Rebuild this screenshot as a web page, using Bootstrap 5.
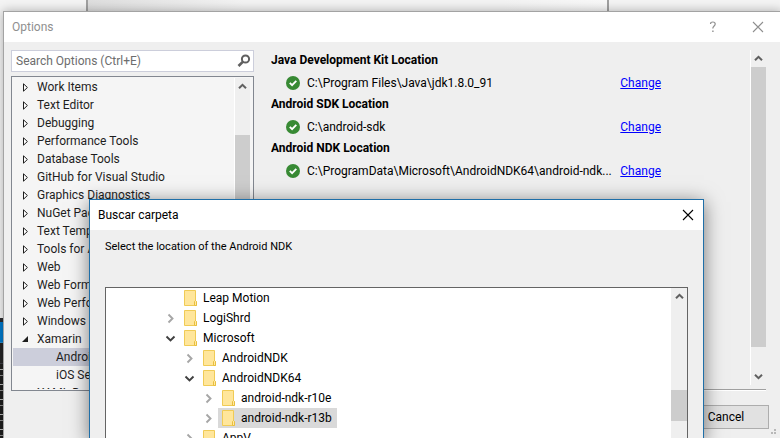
<!DOCTYPE html>
<html lang="en">
<head>
<meta charset="utf-8">
<meta name="viewport" content="width=device-width, initial-scale=1">
<title>Options</title>
<link href="https://cdn.jsdelivr.net/npm/bootstrap@5.3.0/dist/css/bootstrap.min.css" rel="stylesheet">
<style>
  body { font: 12px/18px Roboto, "Open Sans", sans-serif; color: #1e1e1e; background: #f4f4f4; }
  button { font: inherit; color: inherit; background: none; border: 0; padding: 0; }
  svg { display: block; flex: none; }

  /* desktop behind the windows */
  .page-behind { position: absolute; left: 86px; right: 171px; top: 0; height: 12px; border: solid #a0a0a0; border-width: 0 2px; background: linear-gradient(90deg, #dedede, #f3f3f3 30%, #f3f3f3 80%, #f8f8f8); }
  .editor-behind { position: absolute; left: 0; width: 4px; top: 318px; bottom: 0; background: #252526; border-top: 4px solid #2d2d30; }
  .editor-tab { height: 21px; background: #007acc; border-bottom: 1px solid #2c8fd0; }
  .editor-code { margin-top: 20px; height: 100%; border-top: 1px solid #3f3f46; background: repeating-linear-gradient(#1e1e1e 0 5px, #bdbdbd 5px 6px, #1e1e1e 6px 11px, #8d8d8d 11px 12px, #1e1e1e 12px 15px); }

  .win { position: absolute; background: #efefef; }
  .win-options { inset: 11px -2px -4px 3px; border: 1px solid #a3a3a3; box-shadow: 0 0 10px rgba(0,0,0,.3); }
  .win-browse { inset: 199px 76px -2px 89px; border: 1px solid #1f6fa8; color: #000; box-shadow: 0 3px 18px rgba(0,0,0,.5); }
  .title-row { height: 30px; background: #fff; flex: none; }
  .title-row h1 { font-size: 12px; line-height: 18px; font-weight: 400; margin: 0; }
  .win-options .title-row { color: #8f8f8f; padding: 0 17px 0 8px; gap: 35px; }
  .win-browse .title-row { padding: 0 9px 0 8px; }

  .options-body { padding: 8px 12px 0 7px; }
  .side-col { width: 243px; }
  .search-box { height: 22px; border: 1px solid #cccedb; background: #fff; padding: 0 2px 0 4px; }
  .search-box input { min-width: 0; border: 0; outline: 0; padding: 0; background: transparent; color: #6d6d6d; }
  .search-box input::placeholder { color: #6d6d6d; opacity: 1; }
  .opt-tree { height: 315px; border: 1px solid #828790; background: #f5f5f5; padding: 1px; }
  .opt-tree ul, .dir-tree ul { list-style: none; margin: 0; padding: 0; }
  .opt-tree li { height: 18px; padding-left: 8px; gap: 7px; white-space: nowrap; }
  .opt-tree li.child { padding-left: 43px; }
  .opt-tree li.chosen { background: #cccedb; }
  .opt-tree li button { width: 9px; height: 9px; }

  .scroller { flex: none; width: 16px; background: #efefef; color: #606060; }
  .scroller.edge { border-left: 1px solid #fff; }
  .opt-tree .scroller { margin-right: 2px; }
  .scroller button { height: 17px; width: 100%; display: flex; align-items: center; justify-content: center; }
  .thumb { background: #cdcdcd; }
  .side-thumb { margin-top: 40px; }
  .pane-thumb { margin-bottom: 21px; }
  .dir-thumb { margin-top: 85px; height: 31px; }

  .pane { margin-left: 17px; min-width: 0; }
  .pane h2 { font-size: 12px; line-height: 20px; font-weight: 700; margin: 0; color: #000; }
  .pane-content { padding-right: 89px; color: #000; }
  .loc-row { height: 24px; padding: 1px 0 0 15px; gap: 7px; }
  .loc-row a { color: #00f; text-decoration: underline; }
  .pane-scroll { height: 335px; }
  .pane-view { padding-right: 3px; }
  .rule { border-top: 1px solid #a0a0a0; border-bottom: 1px solid #fff; margin: 4px 3px 0 0; height: 2px; }
  .footer-row { margin-top: 14px; }
  .cancel-btn { width: 86px; height: 24px; border: 1px solid #adadad; background: #e1e1e1; color: #000; }
  .grip { position: absolute; right: 3px; bottom: 4px; }

  .browse-body { padding: 8px 15px 0; min-height: 0; }
  .browse-body p { font-size: 11px; line-height: 18px; margin: 0 0 31px; }
  .dir-tree { min-height: 0; border: 1px solid #646464; border-bottom: 0; background: #fff; }
  .dir-tree li { height: 20px; padding-left: 59px; line-height: 20px; white-space: nowrap; }
  .dir-tree li.l1 { padding-left: 78px; }
  .dir-tree li.l2 { padding-left: 97px; }
  .dir-tree li button, .dir-tree .no-toggle { width: 11px; height: 11px; flex: none; }
  .dir-name { padding: 0 5px 0 4px; margin-left: 4px; gap: 6px; height: 20px; }
  .dir-name.chosen { background: #d9d9d9; }
</style>
<script src="https://cdn.jsdelivr.net/npm/bootstrap@5.3.0/dist/js/bootstrap.bundle.min.js"></script>
</head>
<body class="vh-100 overflow-hidden position-relative">

<svg width="0" height="0" class="position-absolute" aria-hidden="true">
  <symbol id="closed" viewBox="0 0 9 9"><path d="M2.5 .8v7.4L6.4 4.5z" fill="#fff" stroke="#1e1e1e"/></symbol>
  <symbol id="opened" viewBox="0 0 9 9"><path d="M7 1v6H1z" fill="#1e1e1e"/></symbol>
  <symbol id="up" viewBox="0 0 9 9"><path d="M1 6.3 4.5 2.8 8 6.3" fill="none" stroke="currentColor" stroke-width="2"/></symbol>
  <symbol id="down" viewBox="0 0 9 9"><path d="M1 2.7 4.5 6.2 8 2.7" fill="none" stroke="currentColor" stroke-width="2"/></symbol>
  <symbol id="right" viewBox="0 0 11 11"><path d="M3.500 1.500 7.500 5.500 3.500 9.500" fill="none" stroke="#a6a6a6" stroke-width="1.900"/></symbol>
  <symbol id="expand" viewBox="0 0 11 11"><path d="M1.5 3.5l4 4 4-4" fill="none" stroke="#404040" stroke-width="1.9"/></symbol>
  <symbol id="folder" viewBox="0 0 13 16"><path d="M.5.5h11v10l1 1v4H.5z" fill="#ffe69b" stroke="#f0cb55"/><path d="M10.500 15.500v-4l1-1 1 1v4z" fill="#ffe9a6" stroke="#e9bf3e"/></symbol>
  <symbol id="ok" viewBox="0 0 14 14"><circle cx="7" cy="7" r="7" fill="#388a34"/><path d="M3.800 6.800l2.300 2.300 4.200-4.200" fill="none" stroke="#fff" stroke-width="1.900"/></symbol>
  <symbol id="cross" viewBox="0 0 12 12"><path d="M1 1l10 10M11 1 1 11" fill="none" stroke="currentColor" stroke-width="1.100"/></symbol>
</svg>

<div class="page-behind"></div>
<div class="editor-behind overflow-hidden"><div class="editor-tab"></div><div class="editor-code"></div></div>

<section class="win win-options" aria-label="Options">
  <header class="title-row d-flex align-items-center">
    <h1 class="flex-grow-1">Options</h1>
    <button type="button" aria-label="Help"><svg width="8" height="12" viewBox="0 0 8 12"><path d="M1.500 3c0-1.300 1-2 2.300-2 1.400 0 2.400.7 2.400 2 0 2-2.400 2-2.400 4.500" fill="none" stroke="currentColor" stroke-width="1.200"/><path d="M3.200 9.500h1.400V11H3.200z" fill="currentColor"/></svg></button>
    <button type="button" aria-label="Close options"><svg width="12" height="12"><use href="#cross"/></svg></button>
  </header>

  <div class="options-body">
    <div class="d-flex">
      <div class="side-col flex-shrink-0">
        <label class="search-box d-flex align-items-center mb-1">
          <input type="text" class="flex-grow-1" placeholder="Search Options (Ctrl+E)" aria-label="Search Options">
          <svg width="14" height="14" viewBox="0 0 14 14"><circle cx="8.500" cy="5" r="3.600" fill="none" stroke="#606060" stroke-width="2"/><path d="M6 7.600 1.500 12" stroke="#606060" stroke-width="2.600"/></svg>
        </label>
        <div class="opt-tree d-flex">
          <ul class="flex-grow-1 overflow-hidden">
            <li class="d-flex align-items-center"><button type="button" aria-label="Expand Work Items"><svg width="9" height="9"><use href="#closed"/></svg></button>Work Items</li>
            <li class="d-flex align-items-center"><button type="button" aria-label="Expand Text Editor"><svg width="9" height="9"><use href="#closed"/></svg></button>Text Editor</li>
            <li class="d-flex align-items-center"><button type="button" aria-label="Expand Debugging"><svg width="9" height="9"><use href="#closed"/></svg></button>Debugging</li>
            <li class="d-flex align-items-center"><button type="button" aria-label="Expand Performance Tools"><svg width="9" height="9"><use href="#closed"/></svg></button>Performance Tools</li>
            <li class="d-flex align-items-center"><button type="button" aria-label="Expand Database Tools"><svg width="9" height="9"><use href="#closed"/></svg></button>Database Tools</li>
            <li class="d-flex align-items-center"><button type="button" aria-label="Expand GitHub"><svg width="9" height="9"><use href="#closed"/></svg></button>GitHub for Visual Studio</li>
            <li class="d-flex align-items-center"><button type="button" aria-label="Expand Graphics Diagnostics"><svg width="9" height="9"><use href="#closed"/></svg></button>Graphics Diagnostics</li>
            <li class="d-flex align-items-center"><button type="button" aria-label="Expand NuGet"><svg width="9" height="9"><use href="#closed"/></svg></button>NuGet Pac</li>
            <li class="d-flex align-items-center"><button type="button" aria-label="Expand Text Templating"><svg width="9" height="9"><use href="#closed"/></svg></button>Text Templating</li>
            <li class="d-flex align-items-center"><button type="button" aria-label="Expand Tools"><svg width="9" height="9"><use href="#closed"/></svg></button>Tools for A</li>
            <li class="d-flex align-items-center"><button type="button" aria-label="Expand Web"><svg width="9" height="9"><use href="#closed"/></svg></button>Web</li>
            <li class="d-flex align-items-center"><button type="button" aria-label="Expand Web Forms"><svg width="9" height="9"><use href="#closed"/></svg></button>Web Forms</li>
            <li class="d-flex align-items-center"><button type="button" aria-label="Expand Web Performance"><svg width="9" height="9"><use href="#closed"/></svg></button>Web Performance</li>
            <li class="d-flex align-items-center"><button type="button" aria-label="Expand Windows"><svg width="9" height="9"><use href="#closed"/></svg></button>Windows Forms</li>
            <li class="d-flex align-items-center"><button type="button" aria-label="Collapse Xamarin"><svg width="9" height="9"><use href="#opened"/></svg></button>Xamarin</li>
            <li class="d-flex align-items-center child chosen">Android</li>
            <li class="d-flex align-items-center child">iOS Settings</li>
            <li class="d-flex align-items-center"><button type="button" aria-label="Expand XAML Designer"></button>XAML Designer</li>
          </ul>
          <div class="scroller edge d-flex flex-column">
            <button type="button" aria-label="Scroll up"><svg width="9" height="9"><use href="#up"/></svg></button>
            <div class="thumb side-thumb flex-grow-1"></div>
          </div>
        </div>
      </div>

      <main class="pane flex-grow-1">
        <div class="pane-view d-flex">
          <div class="pane-content flex-grow-1 overflow-hidden">
            <h2>Java Development Kit Location</h2>
            <div class="loc-row d-flex align-items-center"><svg width="14" height="14"><use href="#ok"/></svg><span class="flex-grow-1 text-truncate">C:\Program Files\Java\jdk1.8.0_91</span><a href="#">Change</a></div>
            <h2>Android SDK Location</h2>
            <div class="loc-row d-flex align-items-center"><svg width="14" height="14"><use href="#ok"/></svg><span class="flex-grow-1 text-truncate">C:\android-sdk</span><a href="#">Change</a></div>
            <h2>Android NDK Location</h2>
            <div class="loc-row d-flex align-items-center"><svg width="14" height="14"><use href="#ok"/></svg><span class="flex-grow-1 text-nowrap">C:\ProgramData\Microsoft\AndroidNDK64\android-ndk...</span><a href="#">Change</a></div>
          </div>
          <div class="scroller edge pane-scroll d-flex flex-column">
            <button type="button" aria-label="Scroll pane up"><svg width="9" height="9"><use href="#up"/></svg></button>
            <div class="thumb pane-thumb flex-grow-1"></div>
            <button type="button" aria-label="Scroll pane down"><svg width="9" height="9"><use href="#down"/></svg></button>
          </div>
        </div>
        <div class="rule"></div>
      </main>
    </div>
    <div class="footer-row d-flex justify-content-end"><button type="button" class="cancel-btn">Cancel</button></div>
  </div>
  <svg class="grip" width="8" height="8" viewBox="0 0 8 8" fill="#b8b8b8"><path d="M4 0h2v2H4zM4 3h2v2H4zM1 3h2v2H1z"/></svg>
</section>

<section class="win win-browse d-flex flex-column overflow-hidden" aria-label="Buscar carpeta">
  <header class="title-row d-flex align-items-center">
    <h1 class="flex-grow-1">Buscar carpeta</h1>
    <button type="button" aria-label="Close"><svg width="12" height="12"><use href="#cross"/></svg></button>
  </header>
  <div class="browse-body flex-grow-1 d-flex flex-column">
    <p>Select the location of the Android NDK</p>
    <div class="dir-tree flex-grow-1 d-flex overflow-hidden">
      <ul class="flex-grow-1 overflow-hidden">
        <li class="d-flex align-items-center"><span class="no-toggle"></span><span class="dir-name d-flex align-items-center"><svg width="13" height="16"><use href="#folder"/></svg>Leap Motion</span></li>
        <li class="d-flex align-items-center"><button type="button" aria-label="Expand LogiShrd"><svg width="11" height="11"><use href="#right"/></svg></button><span class="dir-name d-flex align-items-center"><svg width="13" height="16"><use href="#folder"/></svg>LogiShrd</span></li>
        <li class="d-flex align-items-center"><button type="button" aria-label="Collapse Microsoft"><svg width="11" height="11"><use href="#expand"/></svg></button><span class="dir-name d-flex align-items-center"><svg width="13" height="16"><use href="#folder"/></svg>Microsoft</span></li>
        <li class="d-flex align-items-center l1"><button type="button" aria-label="Expand AndroidNDK"><svg width="11" height="11"><use href="#right"/></svg></button><span class="dir-name d-flex align-items-center"><svg width="13" height="16"><use href="#folder"/></svg>AndroidNDK</span></li>
        <li class="d-flex align-items-center l1"><button type="button" aria-label="Collapse AndroidNDK64"><svg width="11" height="11"><use href="#expand"/></svg></button><span class="dir-name d-flex align-items-center"><svg width="13" height="16"><use href="#folder"/></svg>AndroidNDK64</span></li>
        <li class="d-flex align-items-center l2"><button type="button" aria-label="Expand r10e"><svg width="11" height="11"><use href="#right"/></svg></button><span class="dir-name d-flex align-items-center"><svg width="13" height="16"><use href="#folder"/></svg>android-ndk-r10e</span></li>
        <li class="d-flex align-items-center l2"><button type="button" aria-label="Expand r13b"><svg width="11" height="11"><use href="#right"/></svg></button><span class="dir-name chosen d-flex align-items-center"><svg width="13" height="16"><use href="#folder"/></svg>android-ndk-r13b</span></li>
        <li class="d-flex align-items-center l1"><button type="button" aria-label="Expand AppV"><svg width="11" height="11"><use href="#right"/></svg></button><span class="dir-name d-flex align-items-center"><svg width="13" height="16"><use href="#folder"/></svg>AppV</span></li>
      </ul>
      <div class="scroller">
        <button type="button" aria-label="Scroll folders up"><svg width="9" height="9"><use href="#up"/></svg></button>
        <div class="thumb dir-thumb"></div>
      </div>
    </div>
  </div>
</section>
</body>
</html>
